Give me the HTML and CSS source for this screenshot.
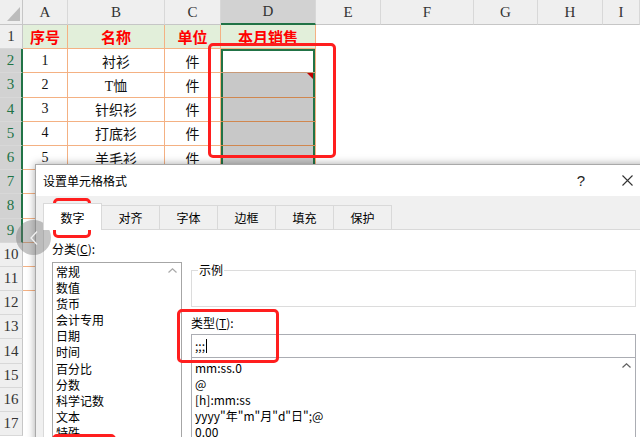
FILE: index.html
```html
<!DOCTYPE html>
<html lang="zh-CN">
<head>
<meta charset="utf-8">
<title>设置单元格格式</title>
<link rel="stylesheet" href="styles.css">
</head>
<body>
<div class="app">
  <div class="sheet">
    <div class="corner"><span class="tri"></span></div>
    <div class="ch">A</div><div class="ch">B</div><div class="ch">C</div><div class="ch sel">D</div><div class="ch">E</div><div class="ch">F</div><div class="ch">G</div><div class="ch">H</div><div class="ch">I</div>

    <div class="rh">1</div><div class="c th">序号</div><div class="c th">名称</div><div class="c th">单位</div><div class="c th">本月销售</div><div class="rest"></div>
    <div class="rh sel">2</div><div class="c">1</div><div class="c">衬衫</div><div class="c">件</div><div class="c act"></div><div class="rest"></div>
    <div class="rh sel">3</div><div class="c">2</div><div class="c">T恤</div><div class="c">件</div><div class="c g note"></div><div class="rest"></div>
    <div class="rh sel">4</div><div class="c">3</div><div class="c">针织衫</div><div class="c">件</div><div class="c g"></div><div class="rest"></div>
    <div class="rh sel">5</div><div class="c">4</div><div class="c">打底衫</div><div class="c">件</div><div class="c g"></div><div class="rest"></div>
    <div class="rh sel">6</div><div class="c">5</div><div class="c">羊毛衫</div><div class="c">件</div><div class="c g"></div><div class="rest"></div>
    <div class="rh sel">7</div><div class="c"></div><div class="c"></div><div class="c"></div><div class="c g"></div><div class="rest"></div>
    <div class="rh sel">8</div><div class="c"></div><div class="c"></div><div class="c"></div><div class="c g"></div><div class="rest"></div>
    <div class="rh sel">9</div><div class="c"></div><div class="c"></div><div class="c"></div><div class="c g"></div><div class="rest"></div>
    <div class="rh">10</div><div class="c"></div><div class="c"></div><div class="c"></div><div class="c"></div><div class="rest"></div>
    <div class="rh">11</div><div class="c"></div><div class="c"></div><div class="c"></div><div class="c"></div><div class="rest"></div>
    <div class="rh">12</div><div class="blank"></div>
    <div class="rh">13</div><div class="blank"></div>
    <div class="rh">14</div><div class="blank"></div>
    <div class="rh">15</div><div class="blank"></div>
    <div class="rh">16</div><div class="blank"></div>
    <div class="rh">17</div><div class="blank"></div>
  </div>

  <div class="dialog">
    <div class="titlebar">
      <span class="title">设置单元格格式</span>
      <span class="tb-btns">
        <span class="help">?</span>
        <svg class="close" width="11" height="11" viewBox="0 0 11 11"><path d="M0.5 0.5L10.5 10.5M10.5 0.5L0.5 10.5" stroke="#333" stroke-width="1.1" fill="none"/></svg>
      </span>
    </div>
    <div class="dbody">
      <div class="tabs">
        <div class="tab active">数字</div>
        <div class="tab">对齐</div>
        <div class="tab">字体</div>
        <div class="tab">边框</div>
        <div class="tab">填充</div>
        <div class="tab">保护</div>
      </div>
      <div class="panel">
        <div class="cat">
          <div class="lbl">分类(<u>C</u>):</div>
          <div class="listbox">
            <ul class="items">
              <li>常规</li><li>数值</li><li>货币</li><li>会计专用</li><li>日期</li><li>时间</li><li>百分比</li><li>分数</li><li>科学记数</li><li>文本</li><li>特殊</li>
            </ul>
            <div class="vscroll"><svg width="9" height="5" viewBox="0 0 9 5"><path d="M0.5 4.5L4.5 0.8L8.5 4.5" stroke="#a8a8a8" stroke-width="1.2" fill="none"/></svg></div>
          </div>
        </div>
        <div class="fmt">
          <fieldset class="sample"><legend>示例</legend></fieldset>
          <div class="lbl type-lbl">类型(<u>T</u>):</div>
          <div class="input">;;;<span class="caret"></span></div>
          <div class="fmtlist">
            <ul class="items">
              <li>mm:ss.0</li><li>@</li><li>[h]:mm:ss</li><li>yyyy"年"m"月"d"日";@</li><li>0.00</li>
            </ul>
            <div class="vscroll"><svg width="9" height="5" viewBox="0 0 9 5"><path d="M0.5 4.5L4.5 0.8L8.5 4.5" stroke="#606060" stroke-width="1.2" fill="none"/></svg></div>
          </div>
        </div>
      </div>
    </div>
  </div>

  <div class="nav"><svg width="8" height="14" viewBox="0 0 8 14"><path d="M7 0.5L1 7L7 13.5" stroke="#f2f2f2" stroke-width="1.3" fill="none"/></svg></div>

  <div class="mark m1"></div>
  <div class="mark m2"></div>
  <div class="mark m3"></div>
  <div class="mark m4"></div>
</div>
</body>
</html>
```
FILE: styles.css
```css
* { box-sizing: border-box; }
html, body { margin: 0; padding: 0; }
body {
  width: 640px;
  height: 437px;
  overflow: hidden;
  background: #fff;
  font-family: "Noto Sans CJK SC", "Noto Sans", sans-serif;
}
.app { position: relative; width: 640px; height: 437px; overflow: hidden; }

/* spreadsheet */
.sheet {
  display: grid;
  grid-template-columns: 23px 45px 97px 56px 95px 65px 93px 64px 65px 1fr;
  grid-template-rows: 25px repeat(17, 24.2px);
}
.corner {
  background: #efefef;
  border-right: 1px solid #c6c6c6;
  border-bottom: 1px solid #c6c6c6;
  display: flex;
  align-items: flex-end;
  justify-content: flex-end;
  padding: 0 2px 3px 0;
}
.tri {
  width: 13px;
  height: 14px;
  background: #bcbcbc;
  clip-path: polygon(100% 0, 100% 100%, 0 100%);
}
.ch {
  background: #efefef;
  border-bottom: 1px solid #c6c6c6;
  border-right: 1px solid #d8d8d8;
  display: flex;
  align-items: center;
  justify-content: center;
  font-family: "Liberation Serif", serif;
  font-size: 15px;
  color: #333;
}
.ch.sel { background: #d2d2d2; border-bottom: 2px solid #217346; }
.rh {
  background: #efefef;
  border-right: 1px solid #c6c6c6;
  border-bottom: 1px solid #d8d8d8;
  display: flex;
  align-items: center;
  justify-content: center;
  font-family: "Liberation Serif", serif;
  font-size: 15px;
  color: #333;
}
.rh.sel { background: #d2d2d2; color: #217346; border-right: 2px solid #217346; }
.c {
  border-right: 1px solid #f4b183;
  border-bottom: 1px solid #f4b183;
  display: flex;
  align-items: center;
  justify-content: center;
  font-family: "Liberation Serif", "Noto Sans CJK SC", serif;
  font-size: 14px;
  color: #111;
}
.c.th {
  background: #e2efda;
  color: #ff0000;
  font-weight: bold;
  font-size: 15px;
  font-family: "Noto Sans CJK SC", sans-serif;
}
.c.act {
  background: #fff;
  border-bottom-color: #c89a78;
  box-shadow: inset 2px 0 #217346, inset -2px 0 #217346, inset 0 2px #217346;
}
.c.g {
  background: #c8c8c8;
  border-bottom-color: #d0874f;
  box-shadow: inset 2px 0 #217346, inset -2px 0 #217346;
}
.c.note { position: relative; }
.c.note::after {
  content: "";
  position: absolute;
  top: 0;
  right: 2px;
  border-top: 6px solid #c00000;
  border-left: 6px solid transparent;
}
.rest { grid-column: 6 / -1; background: #fff; }
.blank { grid-column: 2 / -1; background: #fff; }

/* dialog */
.dialog {
  position: absolute;
  left: 35px;
  top: 164px;
  width: 615px;
  height: 290px;
  background: #f0f0f0;
  border: 1px solid #a9a9a9;
  box-shadow: 0 0 8px rgba(0, 0, 0, 0.35);
  display: flex;
  flex-direction: column;
  font-size: 12px;
  line-height: 16px;
  color: #000;
}
.titlebar {
  height: 31px;
  flex: none;
  background: #fff;
  display: flex;
  align-items: center;
  justify-content: space-between;
  padding: 0 16px 0 7px;
}
.tb-btns { display: flex; align-items: center; gap: 31px; }
.help {
  width: 20px;
  text-align: center;
  font-family: "Liberation Sans", sans-serif;
  font-size: 15px;
  color: #222;
}
.close { display: block; }
.dbody {
  flex: 1;
  padding: 9px 0 0 7px;
  display: flex;
  flex-direction: column;
}
.tabs { display: flex; align-items: flex-end; height: 24px; flex: none; }
.tab {
  width: 59px;
  height: 24px;
  margin-right: -1px;
  border: 1px solid #d9d9d9;
  border-bottom: none;
  display: flex;
  align-items: center;
  justify-content: center;
  background: #f0f0f0;
}
.tab.active {
  height: 27px;
  margin-bottom: -1px;
  padding-top: 2px;
  background: #fff;
  position: relative;
  z-index: 1;
}
.panel {
  flex: 1;
  background: #fff;
  border: 1px solid #d9d9d9;
  display: flex;
  gap: 9px;
  padding: 11px 8px 0 8px;
}
.cat { width: 130px; flex: none; display: flex; flex-direction: column; }
.lbl { line-height: 16px; }
.listbox {
  margin-top: 5px;
  flex: 1;
  border: 1px solid #a6a6a6;
  border-bottom: none;
  display: flex;
}
.items {
  list-style: none;
  margin: 0;
  padding: 1px 0 0 3px;
  flex: 1;
  line-height: 16.1px;
  white-space: nowrap;
}
.vscroll {
  width: 17px;
  flex: none;
  display: flex;
  justify-content: center;
  align-items: flex-start;
  padding-top: 5px;
}
.fmt { width: 445px; flex: none; margin-top: 21px; display: flex; flex-direction: column; }
.sample {
  margin: 0;
  padding: 0 6px;
  border: 1px solid #dcdcdc;
  height: 45px;
  min-inline-size: 0;
}
.sample legend { padding: 0 1px; line-height: 16px; }
.type-lbl { margin-top: 8px; }
.input {
  margin-top: 3px;
  height: 24px;
  border: 1px solid #abadb3;
  padding-left: 3px;
  display: flex;
  align-items: center;
}
.caret { width: 1px; height: 14px; background: #000; margin-left: 1px; }
.fmtlist {
  margin-top: -1px;
  flex: 1;
  border: 1px solid #abadb3;
  border-bottom: none;
  display: flex;
}
.fmtlist .items { padding-top: 2px; }

/* navigation circle */
.nav {
  position: absolute;
  left: 16px;
  top: 220px;
  width: 35px;
  height: 35px;
  border-radius: 50%;
  background: rgba(110, 110, 110, 0.4);
  display: flex;
  align-items: center;
  justify-content: center;
}

/* red annotations */
.mark { position: absolute; border: 3px solid #ff1e1e; border-radius: 5px; }
.m1 { left: 208px; top: 43px; width: 128px; height: 115px; }
.m2 { left: 53px; top: 198px; width: 38px; height: 40px; }
.m3 { left: 177px; top: 309px; width: 102px; height: 54px; }
.m4 { left: 52px; top: 434px; width: 64px; height: 20px; }
```
